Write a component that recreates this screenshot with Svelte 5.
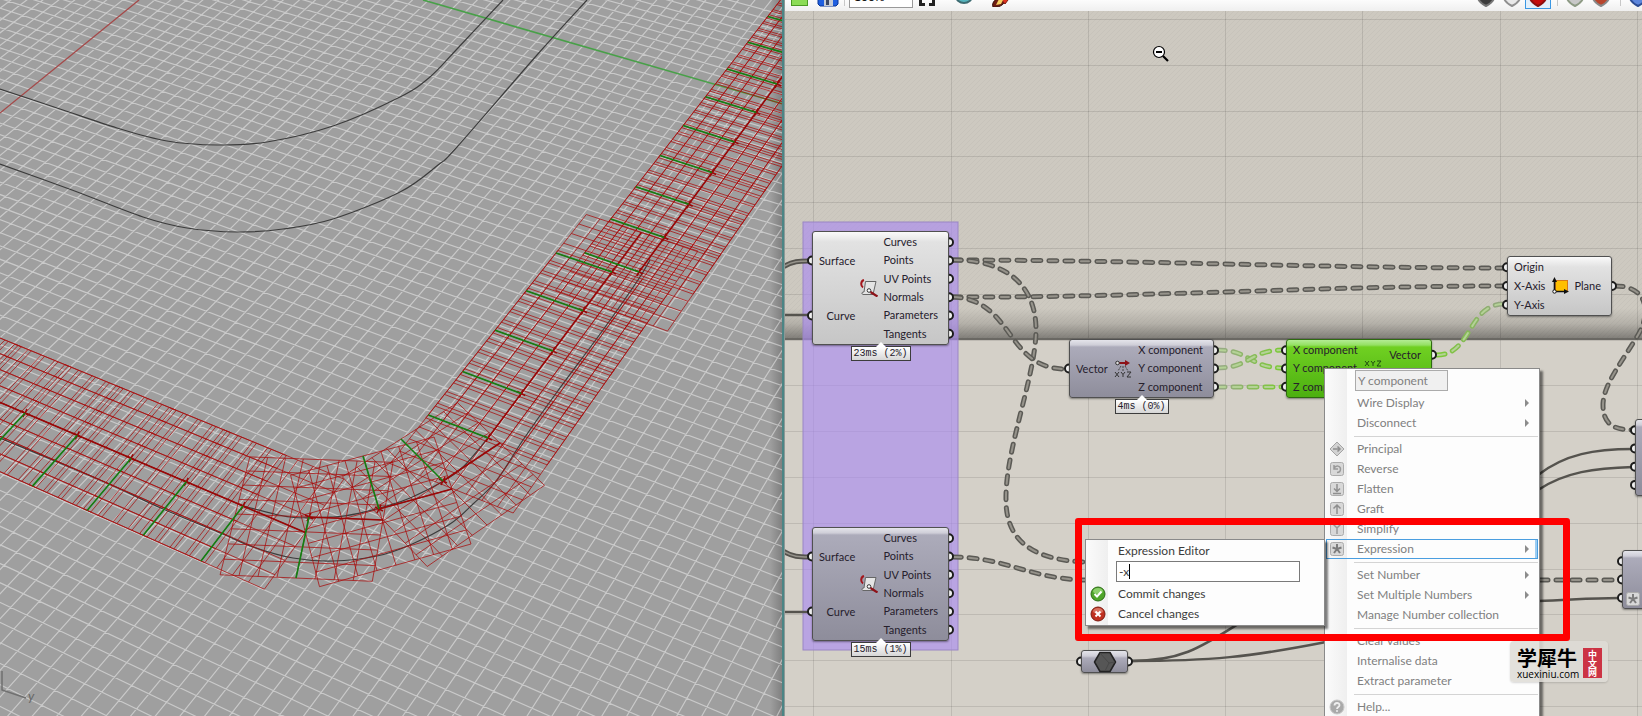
<script lang="ts">
	type Pt = [number, number];

	// ---- perspective ground plane ----
	// vanishing points of the two grid directions, and the world origin
	const VX: Pt = [1900, -1426];
	const VY: Pt = [-3920, -1260];
	const ORIGIN: Pt = [214, -61];
	const A = -0.0045;
	const B = -0.00273;

	const M = [
		[A * VX[0], B * VY[0], ORIGIN[0]],
		[A * VX[1], B * VY[1], ORIGIN[1]],
		[A, B, 1]
	];

	function project(u: number, v: number): Pt {
		const w = M[2][0] * u + M[2][1] * v + M[2][2];
		return [
			(M[0][0] * u + M[0][1] * v + M[0][2]) / w,
			(M[1][0] * u + M[1][1] * v + M[1][2]) / w
		];
	}

	function unproject([x, y]: Pt): Pt {
		const a = M[0][0] - x * M[2][0];
		const b = M[0][1] - x * M[2][1];
		const c = M[1][0] - y * M[2][0];
		const d = M[1][1] - y * M[2][1];
		const e = x * M[2][2] - M[0][2];
		const f = y * M[2][2] - M[1][2];
		const det = a * d - b * c;
		return [(e * d - b * f) / det, (a * f - e * c) / det];
	}

	const seg = (p: Pt, q: Pt) =>
		`M${p[0].toFixed(1)} ${p[1].toFixed(1)}L${q[0].toFixed(1)} ${q[1].toFixed(1)}`;

	// walk from a point towards a vanishing point, far enough to leave the view
	function ray(p: Pt, v: Pt): string {
		const dx = v[0] - p[0];
		const dy = v[1] - p[1];
		const l = Math.hypot(dx, dy);
		const k = 1700 / l;
		return seg([p[0] - dx * k, p[1] - dy * k], [p[0] + dx * k, p[1] + dy * k]);
	}

	const groundLines: string[] = [];
	for (let i = -10; i < 100; i++) {
		if (i !== 0) groundLines.push(ray(project(i, 0), VY));
	}
	for (let i = -50; i < 100; i++) {
		if (i !== 0) groundLines.push(ray(project(0, i), VX));
	}
	const ground = groundLines.join('');

	// a preview plane in ground units: centre, x axis, y axis
	type Plane = { c: Pt; x: Pt; y: Pt };

	// neighbouring planes are a little less than four cells apart
	const OVERLAP = 4 / 3.75;

	// evenly spaced planes on a straight stretch; before/after continue it past the ends
	function run(from: Pt, to: Pt, greenEnd: Pt, steps: number, before: number, after: number): Plane[] {
		const p = unproject(from);
		const q = unproject(to);
		const g = unproject(greenEnd);
		const y: Pt = [g[0] - q[0], g[1] - q[1]];
		const step: Pt = [(q[0] - p[0]) / steps, (q[1] - p[1]) / steps];
		const x: Pt = [step[0] * OVERLAP, step[1] * OVERLAP];
		const out: Plane[] = [];
		for (let i = -before; i <= steps + after; i++) {
			out.push({ c: [p[0] + step[0] * i, p[1] + step[1] * i], x, y });
		}
		return out;
	}

	function single(centre: Pt, greenEnd: Pt, redEnd: Pt): Plane {
		const c = unproject(centre);
		const g = unproject(greenEnd);
		const r = unproject(redEnd);
		return { c, x: [r[0] - c[0], r[1] - c[1]], y: [g[0] - c[0], g[1] - c[1]] };
	}

	const planes: Plane[] = [
		...run([639, 272], [777, 84], [727, 69], 6, 0, 3),
		...run([488, 438], [612, 272], [556, 253], 4, 0, 0),
		single([443, 481], [401, 439], [500, 443]),
		single([379, 509], [363, 456], [452, 489]),
		single([309, 517], [296, 578], [383, 520]),
		...run([25, 413], [243, 506], [201, 561], 4, 3, 0)
	];

	let meshPath = '';
	let xAxes = '';
	let yAxes = '';
	for (const { c, x, y } of planes) {
		const at = (s: number, t: number) =>
			project(c[0] + s * x[0] + t * y[0], c[1] + s * x[1] + t * y[1]);
		for (let i = -4; i <= 4; i++) {
			meshPath += seg(at(i / 4, -1), at(i / 4, 1)) + seg(at(-1, i / 4), at(1, i / 4));
		}
		xAxes += seg(at(0, 0), at(1, 0));
		yAxes += seg(at(0, 0), at(0, 1));
	}
	const centres = planes.map(({ c }) => project(c[0], c[1]));

	function smooth(pts: Pt[]): string {
		let d = `M${pts[0].join(' ')}`;
		for (let i = 0; i < pts.length - 1; i++) {
			const p0 = pts[i - 1] ?? pts[i];
			const p1 = pts[i];
			const p2 = pts[i + 1];
			const p3 = pts[i + 2] ?? p2;
			d += `C${p1[0] + (p2[0] - p0[0]) / 6} ${p1[1] + (p2[1] - p0[1]) / 6} `;
			d += `${p2[0] - (p3[0] - p1[0]) / 6} ${p2[1] - (p3[1] - p1[1]) / 6} ${p2[0]} ${p2[1]}`;
		}
		return d;
	}

	const rails = [
		smooth([[0, 89], [60, 109], [117, 128], [167, 141], [217, 145], [267, 142], [333, 126], [400, 97], [430, 77], [457, 49], [503, 0]]),
		smooth([[0, 164], [72, 190], [143, 217], [187, 228], [237, 232], [283, 229], [333, 219], [400, 192], [438, 165], [457, 147], [537, 55], [587, 0]]),
		smooth([[0, 438], [100, 480], [163, 509], [223, 534], [253, 547], [293, 558], [333, 561], [377, 556], [410, 545], [450, 524], [473, 504], [497, 480], [523, 440], [557, 392], [603, 330], [638, 280], [650, 260]]),
		smooth([[243, 506], [290, 517], [333, 517], [360, 513], [390, 505], [410, 498], [440, 483], [463, 467], [488, 438]])
	];

	// ---- node canvas ----
	const pan = { x: -785, y: -11 };
	const gridX = [813, 951, 1088, 1225, 1362, 1500, 1637];
	const gridY = Array.from({ length: 16 }, (_, i) => Math.round(19 + i * 45.8));

	type Node = {
		id: string;
		x: number;
		y: number;
		w: number;
		h: number;
		tone: 'light' | 'grey' | 'green';
		icon: string;
		inputs: string[];
		outputs: string[];
		alignIn?: 'right';
		bare?: boolean;
		time?: string;
	};

	const frameOutputs = ['Curves', 'Points', 'UV Points', 'Normals', 'Parameters', 'Tangents'];

	const nodes: Node[] = [
		{ id: 'srf1', x: 812, y: 231, w: 137, h: 114, tone: 'light', icon: 'pull', inputs: ['Surface', 'Curve'], outputs: frameOutputs, alignIn: 'right', time: '23ms (2%)' },
		{ id: 'srf2', x: 812, y: 527, w: 137, h: 114, tone: 'grey', icon: 'pull', inputs: ['Surface', 'Curve'], outputs: frameOutputs, alignIn: 'right', time: '15ms (1%)' },
		{ id: 'dec', x: 1069, y: 339, w: 145, h: 59, tone: 'grey', icon: 'split', inputs: ['Vector'], outputs: ['X component', 'Y component', 'Z component'], time: '4ms (0%)' },
		{ id: 'vec', x: 1286, y: 339, w: 146, h: 59, tone: 'green', icon: 'join', inputs: ['X component', 'Y component', 'Z component'], outputs: ['Vector', ''] },
		{ id: 'plane', x: 1507, y: 256, w: 105, h: 60, tone: 'light', icon: 'plane', inputs: ['Origin', 'X-Axis', 'Y-Axis'], outputs: ['Plane'] },
		{ id: 'edge1', x: 1635, y: 419, w: 120, h: 77, tone: 'grey', icon: '', inputs: ['', '', '', ''], outputs: [], bare: true },
		{ id: 'edge2', x: 1622, y: 550, w: 120, h: 59, tone: 'grey', icon: '', inputs: ['', '', '*'], outputs: [], bare: true },
		{ id: 'brep', x: 1081, y: 650, w: 47, h: 23, tone: 'grey', icon: 'hex', inputs: [''], outputs: [''], bare: true }
	];

	const rowY = (n: Node, i: number, count: number) => n.y + 2 + ((n.h - 4) * (i + 0.5)) / count;

	const grips = nodes.flatMap((n) => [
		...n.inputs.map((_, i) => [n.x, rowY(n, i, n.inputs.length)]),
		...n.outputs.map((_, i) => [n.x + n.w, rowY(n, i, n.outputs.length)])
	]);

	const dashed = [
		'M953 260C1130 260 1320 268 1504 268',
		'M953 297C1130 298 1320 286 1504 286',
		'M953 260C1010 260 1036 288 1036 330C1036 375 1005 450 1006 500C1006 546 1040 560 1085 562',
		'M953 297C1015 300 1005 369 1066 369',
		'M953 557C1005 557 1030 579 1085 580',
		'M1615 286C1650 286 1650 315 1638 335C1622 362 1603 385 1603 405C1603 425 1615 430 1633 430',
		'M1540 580H1619'
	];
	const greenWires = [
		'M1217 350C1250 350 1250 368 1283 368',
		'M1217 368C1250 368 1250 350 1283 350'
	];
	const solid = [
		'M1538 475C1565 454 1595 449 1633 449',
		'M1538 490C1565 472 1595 468 1633 467',
		'M1538 601C1570 600 1590 598 1619 598',
		'M1131 661C1180 661 1200 648 1238 624',
		'M1131 661C1210 661 1250 657 1326 642',
		'M785 315H809',
		'M785 612H809'
	];
	const doubleWires = ['M783 267C792 261 800 261 809 261', 'M783 551C792 557 800 557 809 557'];

	type Item = { label?: string; icon?: string; arrow?: boolean; active?: boolean };
	const menu: Item[] = [
		{ label: 'Wire Display', arrow: true },
		{ label: 'Disconnect', arrow: true },
		{},
		{ label: 'Principal', icon: 'principal' },
		{ label: 'Reverse', icon: 'reverse' },
		{ label: 'Flatten', icon: 'flatten' },
		{ label: 'Graft', icon: 'graft' },
		{ label: 'Simplify', icon: 'simplify' },
		{ label: 'Expression', icon: 'star', arrow: true, active: true },
		{},
		{ label: 'Set Number', arrow: true },
		{ label: 'Set Multiple Numbers', arrow: true },
		{ label: 'Manage Number collection' },
		{},
		{ label: 'Clear values' },
		{ label: 'Internalise data' },
		{ label: 'Extract parameter' },
		{},
		{ label: 'Help...', icon: 'help' }
	];

	let paramName = $state('Y component');
	let expression = $state('-x');
	let zoomLevel = $state('100%');
</script>

{#snippet menuIcon(kind: string)}
	<svg class="menu-icon" viewBox="0 0 16 16" width="16" height="16" aria-hidden="true">
		{#if kind === 'principal'}
			<path d="M8 1L15 8L8 15L1 8Z" fill="#d2d2d2" stroke="#a4a4a4" stroke-linejoin="round" />
			<path d="M4 8H11M8.500 5.500L11 8L8.500 10.500" fill="none" stroke="#8e8e8e" stroke-width="1.500" />
		{:else if kind === 'help'}
			<circle cx="8" cy="8" r="7" fill="#a9a9a9" stroke="#c8c8c8" />
			<path d="M5.500 6.500C5.500 3.200 10.500 3.200 10.500 6.200C10.500 8 8 8 8 10" fill="none" stroke="#eee" stroke-width="1.800" />
			<circle cx="8" cy="12" r="1" fill="#eee" />
		{:else}
			<rect x="1.500" y="1.500" width="13" height="13" rx="2" fill="#d8d8d8" stroke="#acacac" />
			{#if kind === 'reverse'}
				<path d="M5 4V8H9M5 7.500C7 3.500 11.500 5 11.500 8C11.500 10 10 11.500 8 11.500" fill="none" stroke="#999" stroke-width="1.500" />
			{:else if kind === 'flatten'}
				<path d="M8 3V10M5 7.500L8 10.500L11 7.500M4 12.500H12" fill="none" stroke="#8e8e8e" stroke-width="1.500" />
			{:else if kind === 'graft'}
				<path d="M8 13V4M4.500 7.500L8 4L11.500 7.500" fill="none" stroke="#8e8e8e" stroke-width="1.500" />
			{:else if kind === 'simplify'}
				<path d="M4.500 3.500L8 7L11.500 3.500M8 7V13" fill="none" stroke="#999" stroke-width="1.500" />
			{:else}
				<path d="M8 3V8M8 8L3.500 6.500M8 8L12.500 6.500M8 8L5 12M8 8L11 12" fill="none" stroke="#7c7c7c" stroke-width="2" />
			{/if}
		{/if}
	</svg>
{/snippet}

{#snippet nodeIcon(kind: string)}
	{#if kind === 'pull'}
		<svg viewBox="0 0 18 18" width="18" height="18" aria-hidden="true">
			<path d="M5.500 2.500H16L13 15.500H3C1.500 15 1.500 13.500 3 13H4Z" fill="#e4e4e4" stroke="#666" />
			<path d="M4 1C0.500 2 0.500 7 3 8.500" fill="none" stroke="#a3161c" stroke-width="2" />
			<circle cx="9" cy="11.500" r="1.800" fill="#fff" stroke="#333" />
			<path d="M10.500 13L17.500 17.500" stroke="#8d1218" stroke-width="2.200" />
		</svg>
	{:else if kind === 'split'}
		<svg viewBox="0 0 18 18" width="18" height="18" aria-hidden="true">
			<path d="M4 3H12" stroke="#8d1218" stroke-width="2" />
			<path d="M11 0L16 3L11 6Z" fill="#8d1218" />
			<circle cx="3.500" cy="3" r="1.800" fill="#ddd" stroke="#333" />
			<path d="M7 6L4 11M9 6V11M11 6L14 11" stroke="#444" stroke-dasharray="2 1" />
			<path d="M1 12L5 17M5 12L1 17M7 12L9 14.500L11 12M9 14.500V17M13 12H17L13 17H17" fill="none" stroke="#333" />
		</svg>
	{:else if kind === 'join'}
		<svg viewBox="0 0 18 18" width="18" height="18" aria-hidden="true">
			<path d="M1 1L5 6M5 1L1 6M7 1L9 3.500L11 1M9 3.500V6M13 1H17L13 6H17" fill="none" stroke="#1f4a10" />
			<path d="M4 8L7 13M9 8V13M14 8L11 13" stroke="#1f4a10" stroke-dasharray="2 1" />
			<path d="M3 15H15" stroke="#8d1218" stroke-width="2" />
		</svg>
	{:else if kind === 'plane'}
		<svg viewBox="0 0 18 18" width="18" height="18" aria-hidden="true">
			<rect x="4.500" y="3.500" width="12" height="11" fill="#ffbf00" stroke="#d8791a" />
			<path d="M3.500 15V3M3 14.500H15" fill="none" stroke="#111" stroke-width="1.600" />
			<path d="M1 5L3.500 0L6 5ZM13 12L18 14.500L13 17Z" fill="#111" />
			<circle cx="3.500" cy="14.500" r="1.700" fill="#fff" stroke="#111" />
		</svg>
	{:else if kind === 'hex'}
		<svg viewBox="0 0 24 22" width="24" height="22" aria-hidden="true">
			<path d="M7 1.500H17L22.500 11L17 20.500H7L1.500 11Z" fill="#565656" stroke="#222" stroke-width="1.500" stroke-linejoin="round" />
			<path d="M7 2L16 12L12 20M16 12L22 11" fill="none" stroke="#484848" />
		</svg>
	{/if}
{/snippet}

{#snippet ball(color: string, shade: string, name: string)}
	<button class="tool" aria-label={name}>
		<svg viewBox="0 0 20 20" width="20" height="20" aria-hidden="true">
			<path d="M2 10C2 2 18 2 18 10C18 14 14 17 10 19C6 17 2 14 2 10Z" fill={color} stroke={shade} stroke-width="2" />
		</svg>
	</button>
{/snippet}

<main class="workspace">
	<section class="viewport" aria-label="Perspective viewport">
		<svg class="scene" aria-hidden="true">
			<path d={ground} class="ground" />
			<path d={seg([139, 0], [0, 113])} class="axis-x" />
			<path d={seg([423, 0], [790, 106])} class="axis-y" />
			{#each rails as d}
				<path {d} class="rail" />
			{/each}
			<path d={meshPath} class="mesh" />
			<path d={xAxes} class="plane-x" />
			{#each centres as [x, y]}
				<path class="plane-x" d="M{x - 4} {y - 2}L{x + 4} {y + 2}M{x - 2} {y + 4}L{x + 2} {y - 4}" />
			{/each}
			<path d={yAxes} class="plane-y" />
			<path d="M2 671V690L26 698" class="gizmo" />
			<text x="28" y="701" class="gizmo-label">y</text>
		</svg>
	</section>

	<section class="editor">
		<div class="toolbar">
			<button class="tool" aria-label="Open">
				<svg viewBox="0 0 20 20" width="20" height="20" aria-hidden="true">
					<rect x="1.500" y="3.500" width="16" height="15" fill="#8bdc55" stroke="#4b9a24" />
				</svg>
			</button>
			<button class="tool" aria-label="Save">
				<svg viewBox="0 0 22 20" width="22" height="20" aria-hidden="true">
					<path d="M1 2H21V17L19 19H3L1 17Z" fill="#1f5fe0" stroke="#0c3796" />
					<rect x="7" y="11" width="9" height="8" fill="#c6ccd6" />
					<rect x="9" y="12" width="3" height="6" fill="#3a4664" />
				</svg>
			</button>
			<span class="rule"></span>
			<select class="zoom" bind:value={zoomLevel} aria-label="Zoom">
				<option>100%</option>
				<option>150%</option>
			</select>
			<button class="tool" aria-label="Zoom extents">
				<svg viewBox="0 0 18 20" width="18" height="20" aria-hidden="true">
					<path d="M7 17.500H2.500V12M11 17.500H15.500V12M7 5H2.500V9M11 5H15.500V9" fill="none" stroke="#222" stroke-width="3" />
				</svg>
			</button>
			<button class="tool view" aria-label="Named views">
				<svg viewBox="0 0 20 20" width="20" height="20" aria-hidden="true">
					<ellipse cx="10" cy="9" rx="8" ry="7" fill="#55b4bd" stroke="#3e6c72" stroke-width="2" />
				</svg>
			</button>
			<button class="tool" aria-label="Sketch">
				<svg viewBox="0 0 20 20" width="20" height="20" aria-hidden="true">
					<path d="M2 20C0 15 6 11 9 10L14 14C13 18 7 21 2 20Z" fill="#6e1c12" stroke="#35100a" />
					<path d="M9 11L14 4L20 9L14 17Z" fill="#e0321e" stroke="#7c1b10" />
					<path d="M8 12L12 13L10 17L5 18Z" fill="#f5d060" />
				</svg>
			</button>
			<div class="tools-right">
				{@render ball('#3c3c3c', '#777', 'Hide preview')}
				{@render ball('#e8e8e8', '#909090', 'Wireframe preview')}
				<span class="pressed">{@render ball('#c40d0d', '#8c0f0f', 'Shaded preview')}</span>
				<span class="rule"></span>
				{@render ball('#c8c8c8', '#8d9a84', 'Selected preview')}
				{@render ball('#b8452c', '#888', 'Document preview')}
				<span class="rule"></span>
				{@render ball('#5d86dc', '#2c4c94', 'Preview quality')}
			</div>
		</div>

		<div class="canvas">
			<div class="world" style="left: {pan.x}px; top: {pan.y}px">
				<svg class="layer" aria-hidden="true">
					<defs>
						<pattern id="hatch" width="5" height="5" patternUnits="userSpaceOnUse">
							<path d="M-1 1L1 -1M0 5L5 0M4 6L6 4" stroke="#000" stroke-opacity="0.028" />
						</pattern>
						<linearGradient id="edge-shadow" x1="0" y1="0" x2="0" y2="1">
							<stop offset="0" stop-color="#000" stop-opacity="0" />
							<stop offset="0.500" stop-color="#000" stop-opacity="0.120" />
							<stop offset="1" stop-color="#000" stop-opacity="0.380" />
						</linearGradient>
						<linearGradient id="to-green" gradientUnits="userSpaceOnUse" x1="1217" y1="0" x2="1283" y2="0">
							<stop offset="0" stop-color="#9aa88a" />
							<stop offset="1" stop-color="#7acb32" />
						</linearGradient>
						<linearGradient id="from-green" gradientUnits="userSpaceOnUse" x1="1436" y1="0" x2="1504" y2="0">
							<stop offset="0" stop-color="#7acb32" />
							<stop offset="1" stop-color="#95a385" />
						</linearGradient>
					</defs>
					<rect x="785" y="0" width="2400" height="339" fill="#cdc9c0" />
					<rect x="785" y="0" width="2400" height="339" fill="url(#hatch)" />
					{#each gridX as x}
						<path d="M{x + 0.5} 0V2000" class="grid-line" />
					{/each}
					{#each gridY as y}
						<path d="M785 {y + 0.5}H3200" class="grid-line" />
					{/each}
					<rect x="785" y="308" width="2400" height="31" fill="url(#edge-shadow)" />
					<rect x="785" y="338" width="2400" height="2" fill="#6a6863" />
					<rect x="803" y="222" width="155" height="428" class="group" />

					{#each dashed as d}
						<path {d} class="tube" />
						<path {d} class="tube-core" />
					{/each}
					{#each greenWires as d}
						<path {d} class="tube" style:stroke="url(#to-green)" />
						<path {d} class="tube-core green" />
					{/each}
					<path d="M1217 387L1282 387.100" class="tube" style:stroke="url(#to-green)" />
					<path d="M1217 387H1282" class="tube-core green" />
					<path d="M1437 355C1472 355 1468 304 1504 304" class="tube" style:stroke="url(#from-green)" />
					<path d="M1437 355C1472 355 1468 304 1504 304" class="tube-core green" />
					{#each solid as d}
						<path {d} class="wire" />
					{/each}
					{#each doubleWires as d}
						<path {d} class="double" />
						<path {d} class="double-core" />
					{/each}
					{#each grips as [x, y]}
						<circle cx={x} cy={y} r="4" class="grip" />
					{/each}
				</svg>

				{#each nodes as n (n.id)}
					<div class="node {n.tone}" class:bare={n.bare} style="left: {n.x}px; top: {n.y}px; width: {n.w}px; height: {n.h}px">
						<div class="ports" class:right={n.alignIn === 'right'}>
							{#each n.inputs as label}
								<span>
									{#if label === '*'}
										{@render menuIcon('star')}
									{:else}
										{label}
									{/if}
								</span>
							{/each}
						</div>
						<div class="glyph">{@render nodeIcon(n.icon)}</div>
						<div class="ports">
							{#each n.outputs as label}
								<span>{label}</span>
							{/each}
						</div>
						{#if n.time}
							<div class="time">{n.time}</div>
						{/if}
					</div>
				{/each}

				<div class="menu context">
					<input class="name" aria-label="Parameter name" bind:value={paramName} />
					{#each menu as item}
						{#if item.label}
							<button class="item" class:active={item.active}>
								<span class="slot">
									{#if item.icon}{@render menuIcon(item.icon)}{/if}
								</span>
								<span class="text">{item.label}</span>
								{#if item.arrow}
									<svg class="arrow" viewBox="0 0 4 8" width="4" height="8" aria-hidden="true">
										<path d="M0 0L4 4L0 8Z" fill="#8c8c8c" />
									</svg>
								{/if}
							</button>
						{:else}
							<hr />
						{/if}
					{/each}
				</div>

				<div class="menu expression">
					<label class="item" for="expr">
						<span class="slot"></span>
						<span class="text">Expression Editor</span>
					</label>
					<input id="expr" class="expr" bind:value={expression} />
					<span class="caret"></span>
					<button class="item">
						<span class="slot">
							<svg viewBox="0 0 16 16" width="16" height="16" aria-hidden="true">
								<circle cx="8" cy="8" r="7" fill="#4fa52a" stroke="#2c6b16" />
								<ellipse cx="8" cy="5" rx="5" ry="3" fill="#8bcf6a" />
								<path d="M4.500 8L7 10.500L11.500 5.500" fill="none" stroke="#fff" stroke-width="2" />
							</svg>
						</span>
						<span class="text">Commit changes</span>
					</button>
					<button class="item">
						<span class="slot">
							<svg viewBox="0 0 16 16" width="16" height="16" aria-hidden="true">
								<circle cx="8" cy="8" r="7" fill="#bf3020" stroke="#7c1a10" />
								<ellipse cx="8" cy="5" rx="5" ry="3" fill="#d8705f" />
								<path d="M5.500 5.500L10.500 10.500M10.500 5.500L5.500 10.500" stroke="#fff" stroke-width="2" />
							</svg>
						</span>
						<span class="text">Cancel changes</span>
					</button>
				</div>

				<div class="marker"></div>

				<div class="brand">
					<div class="brand-name">
						<strong>学犀牛</strong>
						<span>xuexiniu.com</span>
					</div>
					<div class="seal">中文网</div>
				</div>

				<svg class="cursor" viewBox="0 0 18 18" width="18" height="18" aria-hidden="true">
					<circle cx="7" cy="7" r="5.500" fill="#fff" stroke="#000" stroke-width="1.200" />
					<path d="M4 7H10" stroke="#000" stroke-width="2" />
					<path d="M11 11L16 16" stroke="#000" stroke-width="2.200" />
				</svg>
			</div>
		</div>
	</section>
</main>

<style>
	:global(body) {
		margin: 0;
		overflow: hidden;
	}

	.workspace {
		display: grid;
		grid-template-columns: 784fr 858fr;
		height: 100vh;
		font-family: Lato, 'Open Sans', sans-serif;
		font-size: 12px;
	}

	button {
		border: none;
		background: none;
		padding: 0;
		font: inherit;
		color: inherit;
		text-align: left;
	}

	.viewport {
		display: flex;
		overflow: hidden;
		background: linear-gradient(to left, #808080, #9f9f9f 12px);
		border-right: 2px solid #4b8585;
	}

	.scene {
		flex: 1;
		width: 100%;
		height: 100%;
		fill: none;
	}

	.ground {
		stroke: #fff;
		stroke-opacity: 0.44;
		stroke-width: 1.2;
	}

	.axis-x {
		stroke: #a54848;
		stroke-width: 1.3;
	}

	.axis-y {
		stroke: #48a048;
		stroke-width: 1.6;
	}

	.rail {
		stroke: #3c3c3c;
		stroke-width: 1.2;
	}

	.mesh {
		stroke: #a80c0c;
		stroke-opacity: 0.75;
		stroke-width: 1;
	}

	.plane-x {
		stroke: #980808;
		stroke-width: 1.6;
	}

	.plane-y {
		stroke: #128012;
		stroke-width: 1.6;
	}

	.gizmo {
		stroke: #707070;
		stroke-width: 1.5;
	}

	.gizmo-label {
		fill: #666;
		font-size: 13px;
		font-style: italic;
	}

	.editor {
		display: flex;
		flex-direction: column;
		min-width: 0;
		overflow: hidden;
		border-left: 1px solid #8c9896;
	}

	.toolbar {
		display: flex;
		align-items: flex-end;
		flex: none;
		height: 11px;
		padding-left: 1px;
		box-sizing: border-box;
		overflow: hidden;
		background: linear-gradient(#fcfcfc, #efefef);
	}

	.tool {
		display: flex;
		justify-content: center;
		flex: none;
		width: 28px;
		padding-bottom: 4px;
	}

	.tool.view {
		width: 46px;
	}

	.rule {
		flex: none;
		width: 1px;
		height: 20px;
		margin: 0 4px 5px 2px;
		background: #c8c8c8;
	}

	.zoom {
		flex: none;
		width: 64px;
		height: 24px;
		margin-bottom: 3px;
		border: 1px solid #999;
		background: #fff;
		font: inherit;
		appearance: none;
		padding: 0 4px;
	}

	.tools-right {
		display: flex;
		align-items: flex-end;
		margin-left: auto;
		margin-right: -9px;
	}

	.tools-right .tool {
		width: 26px;
	}

	.tools-right .rule {
		margin: 0 4px 5px 6px;
	}

	.pressed {
		box-sizing: border-box;
		height: 26px;
		display: flex;
		align-items: flex-end;
		margin-bottom: 2px;
		border: 1px solid #3b97e3;
		background: #e3f0fb;
	}

	.pressed .tool {
		width: 24px;
		padding-bottom: 1px;
	}

	.canvas {
		position: relative;
		flex: 1;
		overflow: hidden;
		background: #d4d0c8;
	}

	.world {
		position: absolute;
		width: 100%;
		height: 100%;
	}

	.layer {
		position: absolute;
		width: 100%;
		height: 100%;
		overflow: visible;
		fill: none;
	}

	.grid-line {
		stroke: #000;
		stroke-opacity: 0.1;
		stroke-width: 1;
	}

	.group {
		fill: #aa8cf0;
		fill-opacity: 0.65;
		stroke: #9a86c4;
	}

	.tube {
		stroke: #5b5a55;
		stroke-width: 5;
		stroke-linecap: round;
		stroke-dasharray: 8 8;
	}

	.tube-core {
		stroke: #96938b;
		stroke-width: 2;
		stroke-linecap: round;
		stroke-dasharray: 8 8;
	}

	.tube-core.green {
		stroke: #b4d296;
	}

	.wire {
		stroke: #55534e;
		stroke-width: 2.5;
	}

	.double {
		stroke: #55534e;
		stroke-width: 5;
	}

	.double-core {
		stroke: #96938b;
		stroke-width: 1.5;
	}

	.grip {
		fill: #f4f4f4;
		stroke: #1c1c1c;
		stroke-width: 2;
	}

	.node {
		position: absolute;
		box-sizing: border-box;
		display: grid;
		grid-template-columns: auto 1fr auto;
		padding: 1px 10px 1px 6px;
		border: 1px solid #505050;
		border-radius: 3px;
		box-shadow: 0 1px 2px rgb(0 0 0 / 0.4);
		font-size: 11px;
		line-height: 14px;
		color: #26202c;
	}

	.node.bare {
		padding: 0 2px;
	}

	.node.light {
		background: linear-gradient(#fafafa, #e2e2e2 10px, #c6c6c6);
	}

	.node.grey {
		background: linear-gradient(#e4e4ea, #cfced8 5px, #acabba 7px, #8e8d9b);
	}

	.node.green {
		background: linear-gradient(#b4ec94, #94e064 5px, #70d022 7px, #4caf10);
		border-color: #2e6a10;
	}

	.ports {
		display: grid;
		grid-auto-rows: 1fr;
		align-items: center;
		white-space: nowrap;
	}

	.ports.right {
		text-align: right;
	}

	.ports span {
		display: block;
	}

	.ports .menu-icon {
		display: block;
	}

	.glyph {
		display: grid;
		place-items: center;
	}

	.time {
		position: absolute;
		top: 100%;
		left: 50%;
		transform: translateX(-50%);
		margin-top: 2px;
		padding: 0 2px;
		border: 1px solid #3c3c3c;
		background: linear-gradient(#fff, #d6d6d6);
		font-family: 'Liberation Mono', monospace;
		font-size: 10px;
		line-height: 13px;
		white-space: pre;
	}

	.time::before {
		content: '';
		position: absolute;
		top: -5px;
		left: 50%;
		margin-left: -5px;
		border: 5px solid transparent;
		border-top: none;
		border-bottom-color: #fff;
	}

	.menu {
		position: absolute;
		box-sizing: border-box;
		display: flex;
		flex-direction: column;
		border: 1px solid #8a8a8a;
		background: linear-gradient(to right, #fbfbfb, #efefef 22px, #fdfdfd 22px);
		box-shadow: 3px 3px 2px rgb(0 0 0 / 0.5);
	}

	.context {
		left: 1324px;
		top: 368px;
		width: 216px;
		padding: 1px;
		color: #808080;
	}

	.name {
		box-sizing: border-box;
		width: 93px;
		height: 21px;
		margin: 0 0 2px 29px;
		padding: 0 2px;
		border: 1px solid #ababab;
		background: #f0f0f0;
		font: inherit;
		color: inherit;
	}

	.item {
		box-sizing: border-box;
		display: flex;
		align-items: center;
		height: 20px;
		line-height: 16px;
		border: 1px solid transparent;
	}

	.item.active {
		border-color: #4a9ee0;
		box-shadow: inset -2px 0 #9ccdf2;
	}

	.slot {
		display: grid;
		place-items: center;
		width: 20px;
	}

	.text {
		flex: 1;
		padding-left: 10px;
	}

	.arrow {
		margin-right: 8px;
	}

	hr {
		width: 184px;
		height: 1px;
		margin: 3px 0 2px 28px;
		border: none;
		background: #d4d4d4;
	}

	.expression {
		left: 1085px;
		top: 539px;
		width: 240px;
		padding: 1px;
		color: #3c3c3c;
	}

	.expr {
		box-sizing: border-box;
		width: 184px;
		height: 21px;
		margin: 0 0 2px 29px;
		padding: 0 2px;
		border: 1px solid #7a7a7a;
		background: #fff;
		font: inherit;
		color: inherit;
	}

	.caret {
		position: absolute;
		left: 43px;
		top: 24px;
		width: 1px;
		height: 15px;
		background: #000;
	}

	.marker {
		position: absolute;
		left: 1075px;
		top: 518px;
		width: 481px;
		height: 109px;
		border: 7px solid #f00;
		border-radius: 3px;
	}

	.brand {
		position: absolute;
		left: 1510px;
		top: 641px;
		box-sizing: border-box;
		display: flex;
		gap: 3px;
		width: 98px;
		height: 41px;
		padding: 7px 6px 2px 7px;
		border-radius: 4px;
		background: rgb(222 220 214 / 0.85);
		box-shadow: 0 1px 2px rgb(0 0 0 / 0.15);
		color: #000;
	}

	.brand-name {
		display: flex;
		flex-direction: column;
		width: 63px;
	}

	.brand-name strong {
		font: 700 20px/20px 'Noto Sans CJK SC', sans-serif;
	}

	.brand-name span {
		font: 10px/12px 'Open Sans', sans-serif;
	}

	.seal {
		display: grid;
		place-items: center;
		width: 19px;
		height: 30px;
		background: #cc3344;
		color: #fff;
		writing-mode: vertical-rl;
		font: 700 9px/19px 'Noto Sans CJK SC', sans-serif;
	}

	.cursor {
		position: absolute;
		left: 1152px;
		top: 45px;
	}
</style>
